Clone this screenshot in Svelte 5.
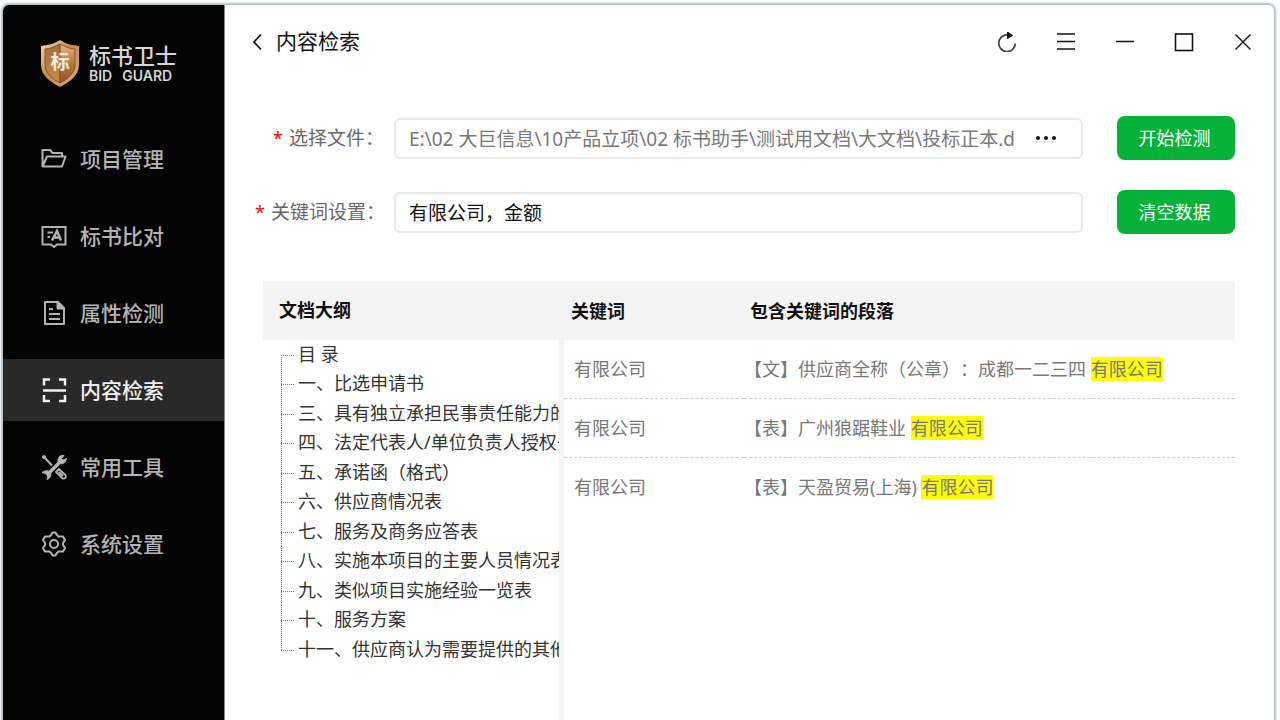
<script lang="ts">
	interface Paragraph {
		keyword: string;
		text: string;
	}

	const menu = [
		{ id: 'project', label: '项目管理' },
		{ id: 'compare', label: '标书比对' },
		{ id: 'property', label: '属性检测' },
		{ id: 'search', label: '内容检索' },
		{ id: 'tools', label: '常用工具' },
		{ id: 'settings', label: '系统设置' }
	];

	const outline = [
		'目 录',
		'一、比选申请书',
		'三、具有独立承担民事责任能力的',
		'四、法定代表人/单位负责人授权书',
		'五、承诺函（格式）',
		'六、供应商情况表',
		'七、服务及商务应答表',
		'八、实施本项目的主要人员情况表',
		'九、类似项目实施经验一览表',
		'十、服务方案',
		'十一、供应商认为需要提供的其他'
	];

	const initialRows: Paragraph[] = [
		{ keyword: '有限公司', text: '【文】供应商全称（公章）：成都一二三四 ' },
		{ keyword: '有限公司', text: '【表】广州狼踞鞋业 ' },
		{ keyword: '有限公司', text: '【表】天盈贸易(上海) ' }
	];

	let active = $state('search');
	let filePath = $state('E:\\02 大巨信息\\10产品立项\\02 标书助手\\测试用文档\\大文档\\投标正本.d');
	let keywords = $state('有限公司，金额');
	let rows = $state(initialRows);

	function runCheck() {
		rows = initialRows;
	}

	function clearData() {
		rows = [];
	}
</script>

<div class="window">
	<aside class="sidebar">
		<div class="brand">
			<svg width="40" height="48" viewBox="0 0 40 48" aria-hidden="true">
				<defs>
					<linearGradient id="rim" x1="0" y1="0" x2="1" y2="1">
						<stop offset="0" stop-color="#f3dcba" />
						<stop offset="0.45" stop-color="#c58a50" />
						<stop offset="1" stop-color="#e2ac70" />
					</linearGradient>
					<linearGradient id="left" x1="0" y1="0" x2="0" y2="1">
						<stop offset="0" stop-color="#a5703c" />
						<stop offset="1" stop-color="#c98a48" />
					</linearGradient>
					<linearGradient id="right" x1="0" y1="0" x2="0" y2="1">
						<stop offset="0" stop-color="#e3b780" />
						<stop offset="0.5" stop-color="#b47a40" />
						<stop offset="1" stop-color="#8a5320" />
					</linearGradient>
				</defs>
				<path d="M20 0C26 4 32 5 39 6V25C39 35 30 42 20 47C10 42 1 35 1 25V6C8 5 14 4 20 0Z" fill="url(#rim)" />
				<path d="M20 4C14 7 9 9 5 9V25C5 33 12 39 20 43Z" fill="url(#left)" stroke="#8a5424" stroke-width="1" />
				<path d="M20 4C26 7 31 9 35 9V25C35 33 28 39 20 43Z" fill="url(#right)" stroke="#8a5424" stroke-width="1" />
				<text x="20" y="29" text-anchor="middle" class="shield-text">标</text>
			</svg>
			<div class="brand-name">
				<span class="brand-cn">标书卫士</span>
				<span class="brand-en"><span>BID</span><span>GUARD</span></span>
			</div>
		</div>

		<nav class="menu">
			{#each menu as item}
				<button class="menu-item" class:active={item.id === active} onclick={() => (active = item.id)}>
					<svg
						width="26"
						height="26"
						viewBox="0 0 26 26"
						fill="none"
						stroke="currentColor"
						stroke-width="2"
						aria-hidden="true"
					>
						{#if item.id === 'project'}
							<path d="M1.5 20V4H9L11.500 7H21V10.500M1.500 20.500L6 10.500H24.500L21 20.500H1.500Z" stroke-linejoin="round" />
						{:else if item.id === 'compare'}
							<path d="M1.500 4H24.500V21.500H16L13 24L10 21.500H1.500Z" />
							<path d="M11 17.500L16 8L20 17.500M13 14.500H19" stroke-width="2.500" />
							<path d="M6.500 9.500H12M6.500 14H9" />
						{:else if item.id === 'property'}
							<path d="M4 2H17L23 8V24H4Z" stroke-linejoin="round" />
							<path d="M16 2V9H23Z" fill="currentColor" stroke-width="1" />
							<path d="M8 9H12M8 14H19M8 19H19" />
						{:else if item.id === 'search'}
							<path d="M3 8.500V2.500H9M18 2.500H24V8.500M24 18V24H18M9 24H3V18M2 13.500H25" stroke-width="2.500" />
						{:else if item.id === 'tools'}
							<path d="M3 3L11 11.500" />
							<circle cx="3" cy="3" r="1.500" fill="currentColor" stroke-width="1" />
							<path d="M6.500 20.500L20 7" stroke-width="3.500" />
							<path d="M23 1.500C18 .5 16 5 17.500 9C21 11 25 9 25.500 4.500L22 6L20.500 4.500Z" fill="currentColor" stroke-width="1" />
							<path d="M1 18.500C4 16 8 16.500 9.500 18.500C10.500 22 9 24.500 6 25.500L6.500 22L4.500 19.500Z" fill="currentColor" stroke-width="1" />
							<path d="M15 18L18 15L24.500 21C25.500 23.500 24 25 21.500 24.500ZM18 18L22 22" stroke-width="1.800" />
						{:else}
							<path
								d="M10.500 3.500L11.500 1.500H14.500L15.500 3.500L17.500 5.500H22L24 9L22 12V14L24 17L22 20.500H17.500L15.500 22.500L14.500 24.500H11.500L10.500 22.500L8.500 20.500H4L2 17L4 14V12L2 9L4 5.500H8.500Z"
								stroke-linejoin="round"
							/>
							<circle cx="13" cy="13" r="4" />
						{/if}
					</svg>
					<span>{item.label}</span>
				</button>
			{/each}
		</nav>
	</aside>

	<main class="main">
		<header class="titlebar">
			<button class="back">
				<svg width="12" height="18" viewBox="0 0 12 18" fill="none" stroke="currentColor" stroke-width="1.800" aria-hidden="true">
					<path d="M10 1.500L3 9L10 16.500" />
				</svg>
				<span>内容检索</span>
			</button>
			<div class="controls">
				<button aria-label="刷新">
					<svg width="20" height="20" viewBox="0 0 20 20" fill="none" stroke="currentColor" aria-hidden="true">
						<path d="M11 3A8.300 8.300 0 1 0 18.300 11.500" stroke-width="1.800" stroke="#444" />
						<path d="M10.500 0L15.500 3.500L10.500 6.500Z" fill="currentColor" />
					</svg>
				</button>
				<button aria-label="菜单">
					<svg width="20" height="20" viewBox="0 0 20 20" stroke="currentColor" stroke-width="1.600" aria-hidden="true">
						<path d="M1 2H19M1 9.500H19M1 17H19" />
					</svg>
				</button>
				<button aria-label="最小化">
					<svg width="20" height="20" viewBox="0 0 20 20" stroke="currentColor" stroke-width="1.600" aria-hidden="true">
						<path d="M1 9.500H19" />
					</svg>
				</button>
				<button aria-label="最大化">
					<svg width="20" height="20" viewBox="0 0 20 20" fill="none" stroke="currentColor" stroke-width="1.600" aria-hidden="true">
						<rect x="1.500" y="2" width="17" height="16.500" />
					</svg>
				</button>
				<button aria-label="关闭">
					<svg width="20" height="20" viewBox="0 0 20 20" stroke="currentColor" stroke-width="1.400" aria-hidden="true">
						<path d="M2.500 2.500L17.500 17.500M17.500 2.500L2.500 17.500" />
					</svg>
				</button>
			</div>
		</header>

		<form class="form" onsubmit={(e) => e.preventDefault()}>
			<div class="form-row">
				<label for="file"><span class="required">*</span>选择文件：</label>
				<div class="field">
					<input id="file" class="path" type="text" bind:value={filePath} />
					<button type="button" class="browse" aria-label="浏览">
						<svg width="22" height="6" viewBox="0 0 22 6" fill="currentColor" aria-hidden="true">
							<circle cx="3" cy="3" r="2" />
							<circle cx="11" cy="3" r="2" />
							<circle cx="19" cy="3" r="2" />
						</svg>
					</button>
				</div>
				<button type="button" class="primary" onclick={runCheck}>开始检测</button>
			</div>
			<div class="form-row">
				<label for="keywords"><span class="required">*</span>关键词设置：</label>
				<div class="field">
					<input id="keywords" type="text" bind:value={keywords} />
				</div>
				<button type="button" class="primary" onclick={clearData}>清空数据</button>
			</div>
		</form>

		<div class="result">
			<section class="outline">
				<h2>文档大纲</h2>
				<ul>
					{#each outline as title}
						<li>{title}</li>
					{/each}
				</ul>
			</section>
			<div class="matches">
				<table>
					<thead>
						<tr>
							<th class="keyword">关键词</th>
							<th>包含关键词的段落</th>
						</tr>
					</thead>
					<tbody>
						{#each rows as row}
							<tr>
								<td class="keyword">{row.keyword}</td>
								<td class="paragraph">{row.text}<mark>{row.keyword}</mark></td>
							</tr>
						{/each}
					</tbody>
				</table>
			</div>
		</div>
	</main>
</div>

<style>
	:global(body) {
		background: #fdfefe;
	}

	:global(#app) {
		font-family: 'Noto Sans', 'Noto Sans CJK SC', sans-serif;
		font-size: 18px;
		text-spacing-trim: space-all;
	}

	button {
		font: inherit;
		color: inherit;
		background: none;
		border: none;
		padding: 0;
		cursor: pointer;
	}

	.window {
		display: flex;
		box-sizing: border-box;
		min-height: calc(100vh - 5px);
		margin: 5px 6px 0 3px;
		border-radius: 6px 6px 0 0;
		background: #fff;
		box-shadow: 0 0 2px 2px #b4bfc5;
		overflow: hidden;
	}

	.sidebar {
		flex: none;
		width: 222px;
		background: #030303;
		color: #b4b4b4;
		border-right: 1px solid #888;
		box-sizing: border-box;
	}

	.brand {
		display: flex;
		align-items: center;
		gap: 9px;
		height: 123px;
		padding: 0 0 5px 37px;
		box-sizing: border-box;
	}

	.shield-text {
		font-size: 19px;
		font-weight: 700;
		fill: #f2ede6;
	}

	.brand-name {
		display: flex;
		flex-direction: column;
		font-family: 'Liberation Sans', 'Noto Sans CJK SC', sans-serif;
		color: #d6d6d6;
	}

	.brand-cn {
		font-size: 22px;
		line-height: 24px;
		font-weight: 500;
	}

	.brand-en {
		display: flex;
		gap: 10px;
		font-family: Inter, sans-serif;
		font-size: 14px;
		line-height: 14px;
		font-weight: 600;
	}

	.menu {
		display: flex;
		flex-direction: column;
		gap: 15px;
	}

	.menu-item {
		display: flex;
		align-items: center;
		gap: 13px;
		height: 62px;
		padding-left: 38px;
		font-size: 21px;
		font-weight: 500;
	}

	.menu-item span {
		padding-bottom: 2px;
	}

	.menu-item.active {
		background: #292929;
		color: #f0f0f0;
	}

	.main {
		flex: 1;
		min-width: 0;
		display: flex;
		flex-direction: column;
		padding: 0 39px 0 30px;
	}

	.titlebar {
		display: flex;
		justify-content: space-between;
		align-items: center;
		height: 74px;
		margin: 0 -18px 0 -4px;
	}

	.back {
		display: flex;
		align-items: center;
		gap: 13px;
		font-size: 21px;
		line-height: 30px;
		color: #111;
	}

	.back span {
		padding-bottom: 2px;
	}

	.controls {
		display: flex;
		gap: 39px;
		color: #111;
	}

	.controls button {
		display: flex;
	}

	.form {
		display: flex;
		flex-direction: column;
		gap: 30px;
		padding-top: 37px;
	}

	.form-row {
		display: flex;
		align-items: center;
		height: 44px;
	}

	label {
		flex: none;
		width: 129px;
		margin-right: 10px;
		padding-bottom: 2px;
		text-align: right;
		white-space: nowrap;
		font-size: 19px;
		color: #666;
	}

	.required {
		margin-right: 6px;
		font-size: 18px;
		color: #f00;
	}

	.field {
		flex: 1;
		min-width: 0;
		display: flex;
		height: 41px;
		box-sizing: border-box;
		border: 2px solid #e8e8e8;
		border-radius: 6px;
	}

	input {
		flex: 1;
		min-width: 0;
		border: none;
		outline: none;
		padding: 0;
		margin: 0 13px;
		background: none;
		font: inherit;
		font-size: 19px;
		color: #111;
	}

	input.path {
		margin-right: 7px;
		color: #777;
	}

	.browse {
		display: flex;
		align-items: center;
		margin-right: 24px;
		color: #111;
	}

	.primary {
		flex: none;
		width: 118px;
		height: 44px;
		margin-left: 34px;
		padding: 0 3px 3px 0;
		border-radius: 8px;
		background: #06b13a;
		color: #fff;
	}

	.result {
		flex: 1;
		display: flex;
		margin-top: 47px;
		margin-left: 8px;
	}

	.outline {
		flex: none;
		width: 301px;
		display: flex;
		flex-direction: column;
	}

	h2 {
		margin: 0;
		padding-left: 16px;
		background: #f4f4f4;
		font-size: 18px;
		line-height: 59px;
		font-weight: 700;
		color: #111;
	}

	ul {
		flex: 1;
		margin: 0;
		padding: 0 0 0 18px;
		list-style: none;
		border-right: 5px solid #f4f4f4;
		overflow: hidden;
		color: #333;
	}

	li {
		display: flex;
		height: 29px;
		line-height: 28px;
		white-space: nowrap;
	}

	li:nth-child(even) {
		height: 30px;
	}

	/* dotted tree connector */
	li::before {
		content: '';
		flex: none;
		width: 13px;
		margin-right: 4px;
		background:
			repeating-linear-gradient(90deg, #777 0 1px, transparent 1px 2px) 0 15px / 13px 1px no-repeat,
			repeating-linear-gradient(#777 0 1px, transparent 1px 2px) 0 0 / 1px 100% no-repeat;
	}

	li:first-child::before {
		background-position: 0 15px, 0 15px;
	}

	li:last-child::before {
		background-size: 13px 1px, 1px 16px;
	}

	.matches {
		flex: 1;
		min-width: 0;
	}

	table {
		width: 100%;
		border-collapse: collapse;
		table-layout: fixed;
	}

	th {
		height: 57px;
		padding: 0 0 2px 6px;
		background: #f4f4f4;
		text-align: left;
		font-weight: 700;
		color: #111;
	}

	th.keyword {
		width: 173px;
		padding-left: 7px;
	}

	td {
		height: 56px;
		padding: 0 0 2px;
		border-bottom: 1px dashed #ccc;
		color: #777;
	}

	td.keyword {
		padding-left: 10px;
	}

	tbody tr:last-child td {
		border-bottom: none;
	}

	.paragraph {
		white-space: pre-wrap;
	}

	mark {
		background: #ff0;
		color: #777;
	}
</style>
